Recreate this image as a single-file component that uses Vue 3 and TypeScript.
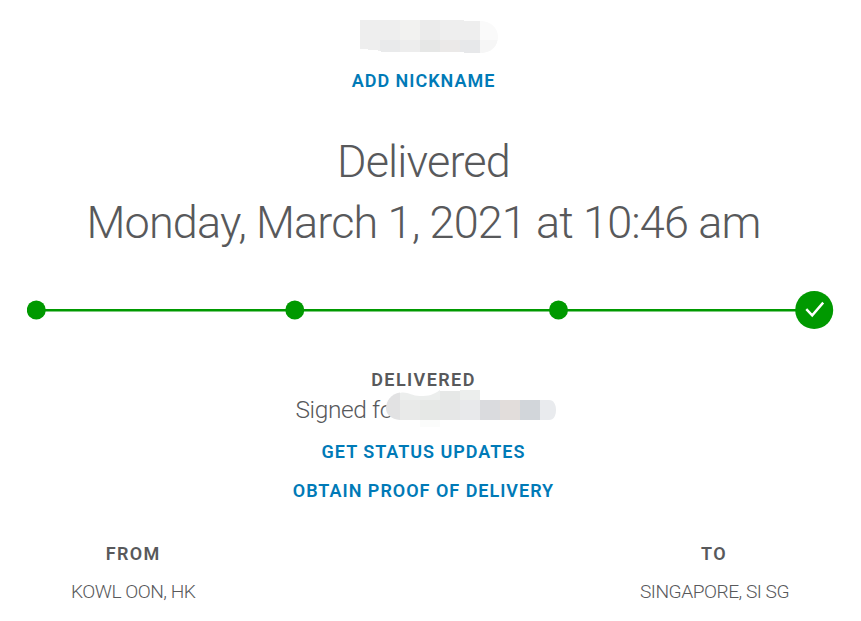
<script setup lang="ts">
interface Place {
  label: string
  value: string
  side: string
}

const places: Place[] = [
  { label: 'FROM', value: 'KOWL OON, HK', side: 'from' },
  { label: 'TO', value: 'SINGAPORE, SI SG', side: 'to' },
]
</script>

<template>
  <main class="tracking">
    <svg class="number" width="138" height="33" viewBox="0 0 138 33" aria-hidden="true">
      <g shape-rendering="crispEdges">
        <path fill="#eeeeee" d="M0 0H104V1H120V20H0Z" />
        <path fill="#f2f2f0" d="M40 0h20v20H40z" />
        <path fill="#ebebeb" d="M60 0h20v20H60z" />
        <path fill="#eeeeee" d="M0 20h20v11h-2v-1H8v-1H0z" />
        <path fill="#e9eaeb" d="M20 20h20v12H21v-1h-1z" />
        <path fill="#ededed" d="M40 20h20v12H40z" />
        <path fill="#e6e7e6" d="M60 20h20v12H60z" />
        <path fill="#ebe9e8" d="M80 20h20v12H80z" />
        <path fill="#e7e8ea" d="M100 20h20v13h-16v-1h-4z" />
      </g>
      <path fill="#fafafa" d="M120 1C131 1 138 8 138 17S131 33 120 33Z" />
      <path fill="#f6f6f6" d="M120 20H137.5C136 28 130 33 120 33Z" />
    </svg>
    <a class="link nickname">ADD NICKNAME</a>

    <h1 class="headline">
      <span class="state">Delivered</span>
      <span class="date">Monday, March 1, 2021 at 10:46 am</span>
    </h1>

    <svg class="progress" width="807" height="40" viewBox="0 0 807 40" role="img" aria-label="Delivered">
      <path d="M9 20.2H787" stroke="#009900" stroke-width="2.4" />
      <g fill="#009900">
        <circle cx="9.3" cy="20" r="9.5" />
        <circle cx="267.8" cy="20" r="9.5" />
        <circle cx="531.5" cy="20" r="9.5" />
        <circle cx="787.2" cy="20" r="19" />
      </g>
      <path d="M779.3 19.2L785.2 25.4L796.2 12.6" fill="none" stroke="#fff" stroke-width="2.4" />
    </svg>

    <h2 class="label status">DELIVERED</h2>
    <div class="signed">
      <span class="recipient">Signed for</span>
      <svg class="signer" width="171" height="38" viewBox="0 0 171 38" aria-hidden="true">
        <path fill="#e2e2e3" d="M14 2.5C5 4 0 11 0 18S5 29 14 30Z" />
        <path fill="#eceeed" d="M14 3C21 1 25 6 34 6S47 5 54 0V10H14Z" />
        <g shape-rendering="crispEdges">
          <path fill="#e6e8e7" d="M54 1h20v9H54z" />
          <path fill="#eceeed" d="M74 0h20v10H74z" />
          <path fill="#e9eae9" d="M14 10h20v20H14z" />
          <path fill="#e6e8e6" d="M34 10h20v20H34z" />
          <path fill="#e6e7e7" d="M54 10h20v20H54z" />
          <path fill="#e8e9eb" d="M74 10h20v20H74z" />
          <path fill="#dadbde" d="M94 10h20v20H94z" />
          <path fill="#e2dddb" d="M114 10h20v20h-20z" />
          <path fill="#d2d6da" d="M134 10h20v20h-20z" />
          <path fill="#fbfcfb" d="M34 30h20v7H34z" />
        </g>
        <path fill="#e9ebee" d="M154 10H163C168 10 170 15 170 20S168 30 163 30H154Z" />
      </svg>
    </div>
    <a class="link updates">GET STATUS UPDATES</a>
    <a class="link proof">OBTAIN PROOF OF DELIVERY</a>

    <div class="places">
      <section v-for="place in places" :key="place.label" class="place" :class="place.side">
        <h2 class="label">{{ place.label }}</h2>
        <p class="value">{{ place.value }}</p>
      </section>
    </div>
  </main>
</template>

<style>
body {
  background: #fff;
}
</style>

<style scoped>
.tracking {
  box-sizing: border-box;
  display: flex;
  flex-direction: column;
  align-items: center;
  width: 861px;
  height: 621px;
  padding: 20px 13px 0 0;
  overflow: hidden;
  color: #58595b;
  font-family: Roboto, sans-serif;
}
.number {
  flex: none;
  margin-left: 10px;
}
.link,
.label {
  flex: none;
  height: 24px;
  margin: 0;
  font-size: 18px;
  line-height: 24px;
  white-space: nowrap;
}
.link {
  color: #007ab7;
  font-weight: 600;
  letter-spacing: 0.98px;
}
.label {
  font-weight: 600;
  letter-spacing: 1.4px;
}
.nickname {
  margin: 16px 1px 0 0;
}
.headline {
  display: flex;
  flex-direction: column;
  align-items: center;
  margin: 38px 1px 0 0;
  font-size: 45px;
  font-weight: 300;
  line-height: 61px;
  white-space: nowrap;
}
.state,
.date {
  letter-spacing: -0.86px;
}
.progress {
  flex: none;
  margin: 37px 0 0 12px;
}
.status {
  margin: 38px 1px 0 0;
}
.signed {
  display: flex;
  align-items: center;
  height: 36px;
  margin-left: 4px;
  font-size: 24.5px;
  font-weight: 300;
  letter-spacing: -0.4px;
  white-space: nowrap;
}
.recipient {
  width: 105.5px;
  margin: -2px 0 0 0.5px;
}
.signer {
  position: relative;
  top: -1px;
  flex: none;
  margin-left: -15px;
}
.updates {
  margin: 12px 1px 0 0;
}
.proof {
  margin: 15px 1px 0 0;
}
.places {
  box-sizing: border-box;
  display: flex;
  justify-content: space-between;
  width: 100%;
  margin-top: 39px;
  padding: 0 59px 0 71px;
}
.place {
  display: flex;
  flex-direction: column;
  align-items: center;
}
.to .label {
  margin-right: 1px;
}
.value {
  margin: 12px 0 0;
  font-size: 19.2px;
  font-weight: 300;
  line-height: 28px;
  letter-spacing: -0.51px;
  white-space: nowrap;
}
</style>
